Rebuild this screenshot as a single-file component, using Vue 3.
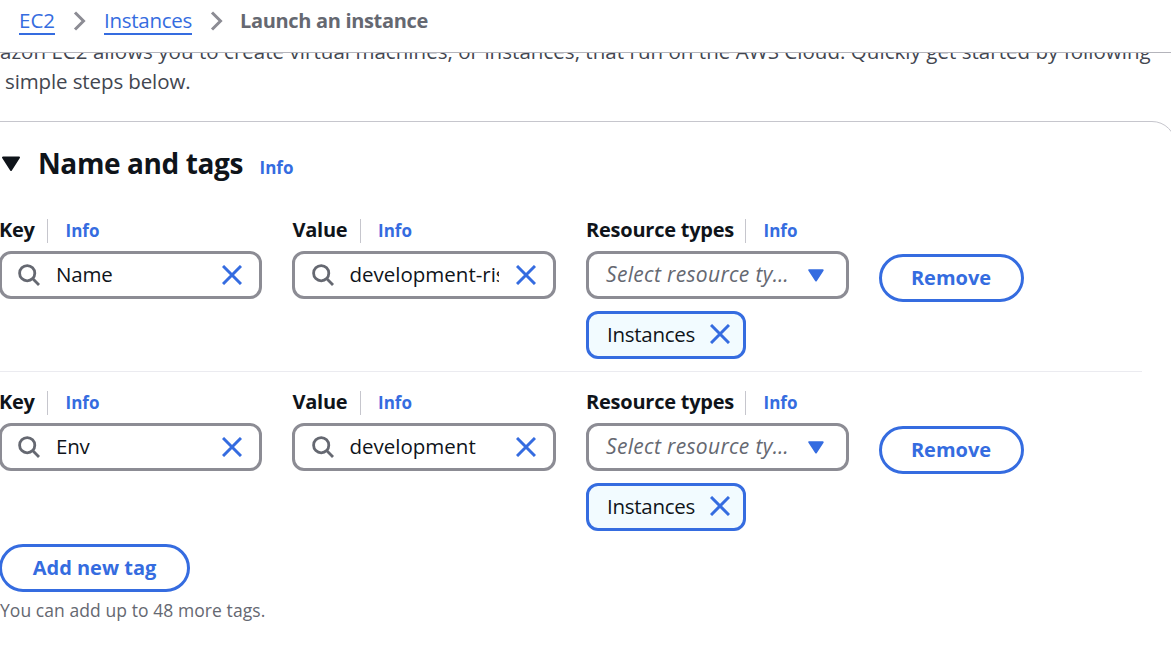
<script setup>
const rows = [
  { key: 'Name', value: 'development-risk' },
  { key: 'Env', value: 'development' },
]
</script>

<template>
  <div class="page">
    <nav class="crumbs">
      <a class="link ec2">EC2</a>
      <svg class="chev" viewBox="0 0 14 20"><path d="M2 1.5 L10.5 10 L2 18.5" /></svg>
      <a class="link inst">Instances</a>
      <svg class="chev" viewBox="0 0 14 20"><path d="M2 1.5 L10.5 10 L2 18.5" /></svg>
      <span class="current">Launch an instance</span>
    </nav>

    <div class="intro">
      <p class="line first">azon EC2 allows you to create virtual machines, or instances, that run on the AWS Cloud. Quickly get started by following</p>
      <p class="line second">simple steps below.</p>
    </div>

    <section class="panel">
      <header class="head">
        <svg class="caret" viewBox="0 0 20 16"><path d="M2 1.5 H18 L10 14 Z" /></svg>
        <h2>Name and tags</h2>
        <a class="info">Info</a>
      </header>

      <div v-for="(row, i) in rows" :key="i" class="row">
        <div class="col">
          <div class="label"><b class="k">Key</b><i class="sep"></i><a class="info">Info</a></div>
          <div class="field first-field">
            <svg class="search" viewBox="0 0 22 22"><circle cx="9.2" cy="9.2" r="7.6" /><path d="M14.6 14.6 L21 21" /></svg>
            <span class="text short">{{ row.key }}</span>
            <svg class="x" viewBox="0 0 20 20"><path d="M1 1 L19 19 M19 1 L1 19" /></svg>
          </div>
        </div>
        <div class="col">
          <div class="label"><b class="v">Value</b><i class="sep"></i><a class="info">Info</a></div>
          <div class="field">
            <svg class="search" viewBox="0 0 22 22"><circle cx="9.2" cy="9.2" r="7.6" /><path d="M14.6 14.6 L21 21" /></svg>
            <span class="text">{{ row.value }}</span>
            <svg class="x" viewBox="0 0 20 20"><path d="M1 1 L19 19 M19 1 L1 19" /></svg>
          </div>
        </div>
        <div class="col">
          <div class="label"><b class="r">Resource types</b><i class="sep"></i><a class="info">Info</a></div>
          <div class="field select">
            <span class="placeholder">Select resource ty…</span>
            <svg class="down" viewBox="0 0 16 13"><path d="M1.3 1.2 H14.7 L8 11.5 Z" /></svg>
          </div>
          <div class="token">
            <span class="inst">Instances</span>
            <svg class="x" viewBox="0 0 20 20"><path d="M1 1 L19 19 M19 1 L1 19" /></svg>
          </div>
        </div>
        <button class="btn remove"><span>Remove</span></button>
      </div>

      <button class="btn add"><span>Add new tag</span></button>
      <p class="hint">You can add up to 48 more tags.</p>
    </section>
  </div>
</template>

<style>
body { margin: 0; background: #fff; overflow: hidden; }
</style>

<style scoped>
* { box-sizing: border-box; }
.page {
  width: 1171px;
  height: 646px;
  overflow: hidden;
  font-family: "Open Sans", "Noto Sans", sans-serif;
  font-size: 20.5px;
  line-height: 28px;
  color: #0f141a;
  white-space: nowrap;
}
p, h2 { margin: 0; }
svg { fill: none; flex: none; display: block; }

.crumbs {
  display: flex;
  align-items: flex-start;
  height: 53px;
  padding: 6px 0 0 19px;
  border-bottom: 1px solid #b4b4bb;
}
.link { color: #356ce0; height: 29px; border-bottom: 2px solid #356ce0; }
.ec2 { width: 36px; }
.inst { letter-spacing: -0.27px; }
.crumbs .inst { width: 88px; }
.chev { width: 14px; height: 20px; margin: 5px 17px 0 18px; }
.chev + .current { margin-left: -1px; }
.chev path { stroke: #8c8c94; stroke-width: 3; }
.current { font-size: 20px; line-height: 30px; font-weight: 700; color: #656871; letter-spacing: -0.33px; }

.intro { height: 68px; overflow: hidden; color: #424650; }
.line { height: 30px; }
.first { margin-top: -16px; letter-spacing: 0.04px; }
.second { padding-left: 5px; letter-spacing: -0.11px; }

.panel {
  width: 1216px;
  height: 600px;
  margin-left: -40px;
  padding: 0 0 0 40px;
  border: 1px solid #c6c6cd;
  border-radius: 24px;
}
.head { display: flex; align-items: center; height: 84px; }
.caret { width: 20px; height: 16px; }
.caret path { fill: #0f141a; stroke: #0f141a; stroke-width: 2; stroke-linejoin: round; }
h2 { font-size: 28px; line-height: 36px; font-weight: 700; margin: -2px 0 0 17px; width: 204px; letter-spacing: -0.4px; }
.head .info { margin: 8px 0 0 17.5px; }
.info { font-size: 17px; line-height: 30px; font-weight: 700; color: #356ce0; }

.row {
  display: grid;
  grid-template-columns: repeat(3, 264px) 145px;
  column-gap: 29.5px;
  align-items: start;
  height: 172px;
  width: 1144px;
  margin-left: -3px;
  padding-top: 15px;
}
.row:nth-of-type(1) { border-bottom: 1px solid #ebebf0; height: 166px; padding-top: 9px; }
.label { display: flex; align-items: center; height: 30px; margin: 0 0 6px 1px; }
.label .info { padding-top: 1px; }
.label b { font-size: 20px; line-height: 30px; font-weight: 700; letter-spacing: -0.24px; }
.k { width: 36px; }
.v { width: 55px; }
.r { width: 147px; }
.sep { width: 1px; height: 24px; margin: 1px 17.5px 0 12px; background: #c6c6cd; }
.field {
  display: flex;
  align-items: center;
  height: 48px;
  padding: 0 17px;
  border: 3px solid #8c8c94;
  border-radius: 12px;
}
.first-field { margin-left: 1px; padding-left: 16px; }
.select { margin-left: 1px; padding-left: 16px; }
.search { width: 22px; height: 22px; margin-right: 16px; }
.search path, .search circle { stroke: #656871; stroke-width: 2.8; }
.text { width: 149px; height: 30px; overflow: hidden; }
.short { letter-spacing: -0.2px; }
.x { width: 20px; height: 20px; }
.field .x { margin-left: 17px; }
.x path { stroke: #356ce0; stroke-width: 3; }
.placeholder { width: 183px; height: 30px; padding-left: 1px; font-size: 21px; font-style: italic; color: #656871; letter-spacing: 0.33px; }
.down { width: 16px; height: 13px; margin-left: 20px; }
.down path { fill: #356ce0; stroke: #356ce0; stroke-width: 2; stroke-linejoin: round; }
.token {
  display: flex;
  align-items: center;
  width: 160px;
  height: 48px;
  margin: 12px 0 0 1px;
  padding-left: 18px;
  border: 3px solid #356ce0;
  border-radius: 12px;
  background: #f2fbff;
}
.token .inst { width: 88px; height: 30px; margin-right: 15px; }
.token .x { margin-top: -2px; }
.btn {
  display: flex;
  align-items: center;
  justify-content: center;
  height: 48px;
  padding: 0;
  border: 3px solid #356ce0;
  border-radius: 24px;
  background: #fff;
  color: #356ce0;
  font: 700 20px/30px "Open Sans", "Noto Sans", sans-serif;
}
.remove { width: 145px; margin-top: 39px; }
.add { width: 191px; margin-left: -2px; }
.hint { font-size: 17.5px; line-height: 26px; margin: 5px 0 0 -1px; color: #656871; letter-spacing: 0.07px; }
</style>
